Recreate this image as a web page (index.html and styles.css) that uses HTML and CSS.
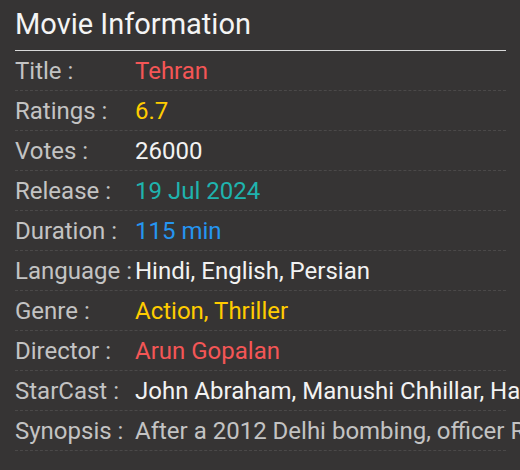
FILE: index.html
```html
<!DOCTYPE html>
<html>
<head>
<meta charset="utf-8">
<link rel="stylesheet" href="styles.css">
</head>
<body>
<div class="panel">
  <h1 class="heading">Movie Information</h1>
  <div class="rows">
    <div class="row"><span class="label">Title :</span><span class="value red">Tehran</span></div>
    <div class="row"><span class="label">Ratings :</span><span class="value gold">6.7</span></div>
    <div class="row"><span class="label">Votes :</span><span class="value white">26000</span></div>
    <div class="row"><span class="label">Release :</span><span class="value teal">19 Jul 2024</span></div>
    <div class="row"><span class="label">Duration :</span><span class="value blue">115 min</span></div>
    <div class="row"><span class="label">Language :</span><span class="value white">Hindi, English, Persian</span></div>
    <div class="row"><span class="label">Genre :</span><span class="value gold">Action, Thriller</span></div>
    <div class="row"><span class="label">Director :</span><span class="value red">Arun Gopalan</span></div>
    <div class="row"><span class="label">StarCast :</span><span class="value white">John Abraham, Manushi Chhillar, Hadi Khanjanpour</span></div>
    <div class="row"><span class="label">Synopsis :</span><span class="value grey">After a 2012 Delhi bombing, officer Rajeev Kumar goes rogue to hunt the culprits</span></div>
  </div>
</div>
</body>
</html>
```
FILE: styles.css
```css
html, body {
  margin: 0;
  padding: 0;
  background: #363434;
  overflow: hidden;
  width: 520px;
  height: 470px;
}
.panel {
  padding: 5px 14px 0 15px;
  font-family: Roboto, "Liberation Sans", sans-serif;
}
.heading {
  margin: 0;
  font-size: 29px;
  font-weight: 400;
  color: #f4f4f4;
  line-height: 38px;
  padding-bottom: 7px;
  border-bottom: 1px solid #d8d8d8;
}
.rows {
  display: flex;
  flex-direction: column;
}
.row {
  display: flex;
  height: 40px;
  align-items: center;
  border-bottom: 1px dashed #4b4949;
  box-sizing: border-box;
  white-space: nowrap;
  font-size: 24px;
  padding-top: 1px;
}
.label {
  width: 120px;
  flex: none;
  color: #c3c3c3;
}
.value { flex: none; }
.red { color: #f45656; }
.gold { color: #ffcc00; }
.white { color: #f2f2f2; }
.teal { color: #1fb3ae; }
.blue { color: #2595f0; }
.grey { color: #c3c3c3; }
```
